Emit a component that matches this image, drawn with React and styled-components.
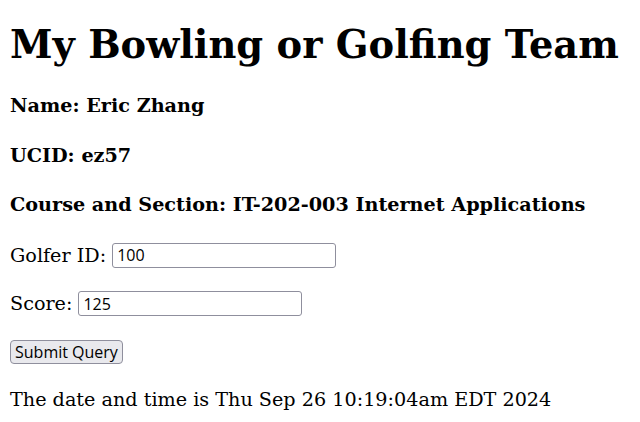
import React from "react";
import styled, { createGlobalStyle } from "styled-components";

const GlobalStyle = createGlobalStyle`
  body {
    margin: 0;
    background: #ffffff;
    color: #000000;
    font-family: "DejaVu Serif", serif;
    font-size: 19.2px;
  }
`;

const Page = styled.div`
  padding: 22px 10px 0;
`;

const Title = styled.h1`
  font-size: 38.4px;
  font-weight: bold;
  margin: 0 0 27px;
`;

const Info = styled.h4`
  font-size: 19.2px;
  font-weight: bold;
  margin: 0 0 26.5px;
`;

const Form = styled.form`
  display: flex;
  flex-direction: column;
  align-items: flex-start;
  gap: 23.5px;
  margin-top: 25px;
`;

const Field = styled.label`
  display: flex;
  align-items: center;
  gap: 6px;
  height: 25px;
`;

const TextInput = styled.input`
  box-sizing: border-box;
  width: 224px;
  height: 25px;
  padding: 1px 4px;
  border: 1px solid #8f8f9d;
  border-radius: 3px;
  background: #ffffff;
  font: 16px "Open Sans", "Noto Sans", sans-serif;
  color: #000000;
`;

const SubmitButton = styled.button`
  box-sizing: border-box;
  height: 24px;
  padding: 0 4px;
  border: 1px solid #8f8f9d;
  border-radius: 4px;
  background: #e9e9ed;
  font: 16px "Open Sans", "Noto Sans", sans-serif;
  color: #000000;
`;

const Stamp = styled.p`
  margin: 24px 0 0;
`;

export default function App() {
  return (
    <Page>
      <GlobalStyle />
      <Title>My Bowling or Golfing Team</Title>
      <Info>Name: Eric Zhang</Info>
      <Info>UCID: ez57</Info>
      <Info>Course and Section: IT-202-003 Internet Applications</Info>
      <Form onSubmit={(e) => e.preventDefault()}>
        <Field>
          Golfer ID: <TextInput type="text" name="golfer_id" defaultValue="100" />
        </Field>
        <Field>
          Score: <TextInput type="text" name="score" defaultValue="125" />
        </Field>
        <SubmitButton type="submit">Submit Query</SubmitButton>
      </Form>
      <Stamp>The date and time is Thu Sep 26 10:19:04am EDT 2024</Stamp>
    </Page>
  );
}
